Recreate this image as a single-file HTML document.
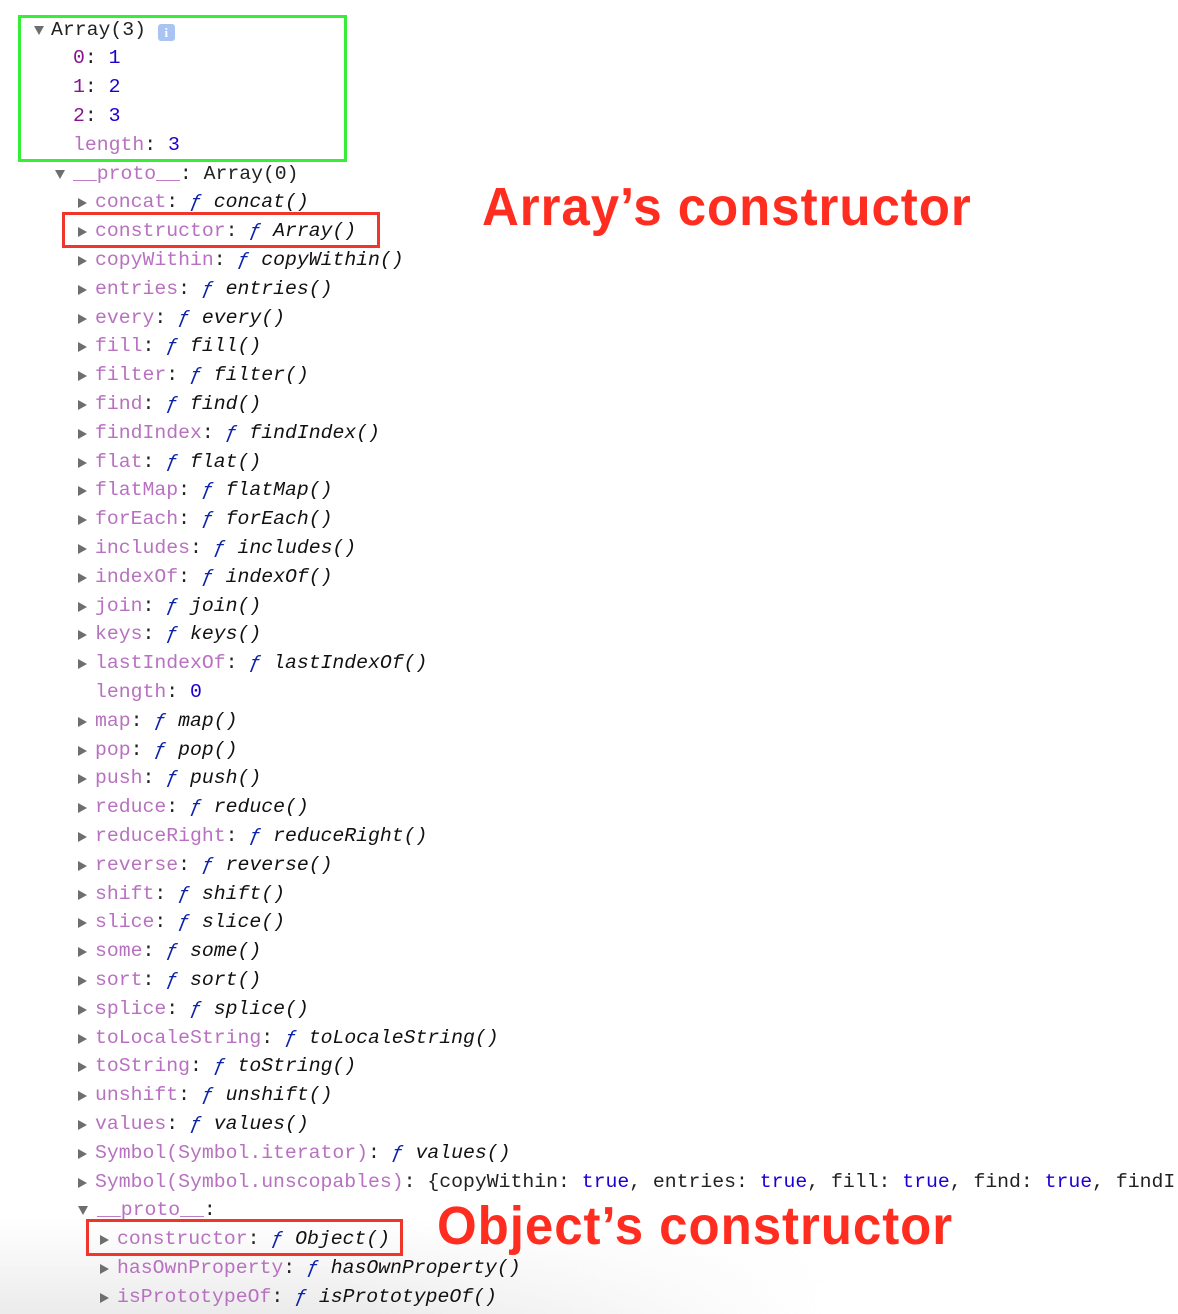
<!DOCTYPE html>
<html><head><meta charset="utf-8"><style>
html,body{margin:0;padding:0}
body{width:1178px;height:1314px;position:relative;overflow:hidden;background:#fff;font-family:"Liberation Mono","DejaVu Sans Mono",monospace;font-size:19.8px;color:#222}
#wrap{position:absolute;left:0;top:0;width:1178px;height:1314px;overflow:hidden}
.fade{position:absolute;left:0;top:1220px;width:1178px;height:94px;background:linear-gradient(to bottom,rgba(235,235,235,0) 0%,rgba(230,230,230,.8) 100%);-webkit-mask-image:linear-gradient(to right,#000 0%,#000 30%,transparent 70%)}
.r{position:absolute;height:28.8px;line-height:28.8px;white-space:nowrap}
.k{color:#b871c0}.i{color:#881391}.n{color:#1c00cf}.f{color:#0d22aa;font-style:italic}.fn{font-style:italic;color:#111}
.tr{position:absolute;width:0;height:0;border-top:5px solid transparent;border-bottom:5px solid transparent;border-left:9px solid #6e6e6e;top:10px}
.td{position:absolute;width:0;height:0;border-left:5.5px solid transparent;border-right:5.5px solid transparent;border-top:9px solid #6e6e6e;top:10px}
.box{position:absolute;box-sizing:border-box}
.ann{position:absolute;font-family:"Comic Sans MS","Liberation Sans",sans-serif;font-weight:bold;color:#ff2d1f;white-space:nowrap;letter-spacing:1px;transform:scaleX(0.945);transform-origin:0 0}
</style></head><body>
<div id="wrap">
<div class="fade"></div>
<div class="box" style="left:18px;top:15px;width:329px;height:147px;border:3px solid #36ee36"></div>
<div class="box" style="left:62px;top:212px;width:318px;height:36px;border:3px solid #f0362a"></div>
<div class="box" style="left:86px;top:1219px;width:317px;height:37px;border:3px solid #f0362a"></div>
<div class="ann" style="left:482px;top:172px;font-size:54px;line-height:70px">Array’s constructor</div>
<div class="ann" style="left:437px;top:1191px;font-size:54px;line-height:70px">Object’s constructor</div>

<div class="r" style="top:15.6px;left:34px"><span class="td" style="left:0"></span><span style="margin-left:17px">Array(3)</span> <span style="display:inline-block;width:17px;height:17px;background:#a9c4f2;border-radius:3px;color:#fff;font-size:13px;line-height:17px;text-align:center;vertical-align:-2px;font-family:'Liberation Serif',serif;font-weight:bold">i</span></div>
<div class="r" style="top:44.4px;left:73px"><span class="i">0</span>: <span class="n">1</span></div>
<div class="r" style="top:73.2px;left:73px"><span class="i">1</span>: <span class="n">2</span></div>
<div class="r" style="top:102px;left:73px"><span class="i">2</span>: <span class="n">3</span></div>
<div class="r" style="top:130.8px;left:73px"><span class="k">length</span>: <span class="n">3</span></div>
<div class="r" style="top:159.6px;left:55px"><span class="td" style="left:0"></span><span style="margin-left:18px"><span class="k">__proto__</span>: Array(0)</span></div>

<div id="list"></div>
</div>
<script>
var items=["concat","constructor|Array","copyWithin","entries","every","fill","filter","find","findIndex","flat","flatMap","forEach","includes","indexOf","join","keys","lastIndexOf","#length","map","pop","push","reduce","reduceRight","reverse","shift","slice","some","sort","splice","toLocaleString","toString","unshift","values","Symbol(Symbol.iterator)|values"];
var h="";
var t=function(r){return (15.6+r*28.8).toFixed(1)};
items.forEach(function(s,j){
 var top=t(6+j);
 if(s[0]=="#"){h+='<div class="r" style="top:'+top+'px;left:95px"><span class="k">length</span>: <span class="n">0</span></div>';return;}
 var p=s.split("|"),k=p[0],v=p[1]||p[0];
 h+='<div class="r" style="top:'+top+'px;left:78px"><span class="tr" style="left:0"></span><span style="margin-left:17px"><span class="k">'+k+'</span>: <span class="f">ƒ</span> <span class="fn">'+v+'()</span></span></div>';
});
h+='<div class="r" style="top:'+t(40)+'px;left:78px;width:1100px;overflow:hidden"><span class="tr" style="left:0"></span><span style="margin-left:17px"><span class="k">Symbol(Symbol.unscopables)</span>: {copyWithin: <span class="n">true</span>, entries: <span class="n">true</span>, fill: <span class="n">true</span>, find: <span class="n">true</span>, findI</span></div>';
h+='<div class="r" style="top:'+t(41)+'px;left:78px"><span class="td" style="left:0"></span><span style="margin-left:19px"><span class="k">__proto__</span>:</span></div>';
[["constructor","Object"],["hasOwnProperty","hasOwnProperty"],["isPrototypeOf","isPrototypeOf"]].forEach(function(a,j){
 h+='<div class="r" style="top:'+t(42+j)+'px;left:100px"><span class="tr" style="left:0"></span><span style="margin-left:17px"><span class="k">'+a[0]+'</span>: <span class="f">ƒ</span> <span class="fn">'+a[1]+'()</span></span></div>';
});
document.getElementById("list").innerHTML=h;
</script>
</body></html>
